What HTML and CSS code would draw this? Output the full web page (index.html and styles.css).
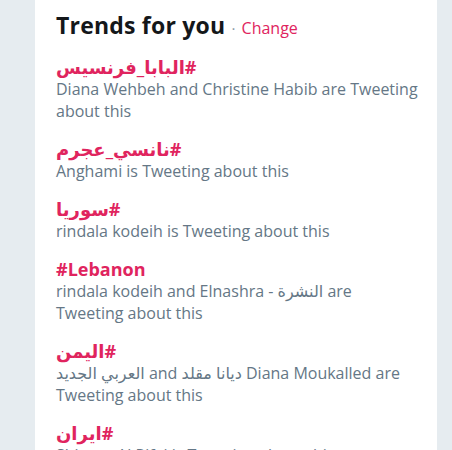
FILE: index.html
```html
<!DOCTYPE html>
<html>
<head>
<meta charset="utf-8">
<link rel="stylesheet" href="styles.css">
</head>
<body>
<div class="page">
  <section class="card">
    <h2 class="title">Trends for you <span class="dot">·</span> <a class="change">Change</a></h2>
    <ul class="trends">
      <li class="trend">
        <div class="name"><span dir="rtl">#البابا_فرنسيس</span></div>
        <div class="desc">Diana Wehbeh and Christine Habib are Tweeting about this</div>
      </li>
      <li class="trend">
        <div class="name"><span dir="rtl">#نانسي_عجرم</span></div>
        <div class="desc">Anghami is Tweeting about this</div>
      </li>
      <li class="trend">
        <div class="name"><span dir="rtl">#سوريا</span></div>
        <div class="desc">rindala kodeih is Tweeting about this</div>
      </li>
      <li class="trend">
        <div class="name">#Lebanon</div>
        <div class="desc">rindala kodeih and Elnashra - النشرة are<br>Tweeting about this</div>
      </li>
      <li class="trend">
        <div class="name"><span dir="rtl">#اليمن</span></div>
        <div class="desc">العربي الجديد and ديانا مقلد Diana Moukalled are Tweeting about this</div>
      </li>
      <li class="trend">
        <div class="name"><span dir="rtl">#ايران</span></div>
        <div class="desc">Shireen Al Rifai is Tweeting about this</div>
      </li>
    </ul>
  </section>
</div>
</body>
</html>
```
FILE: styles.css
```css
html, body {
  margin: 0;
  padding: 0;
  background: #e6ecf0;
  height: 100%;
  overflow: hidden;
}
body {
  font-family: "Open Sans", "DejaVu Sans", sans-serif;
}
.page {
  display: flex;
  height: 450px;
}
.card {
  margin-left: 35px;
  width: 402px;
  background: #ffffff;
  padding: 11px 12px 0 21px;
  box-sizing: border-box;
}
.title {
  margin: 0 0 6px 0;
  font-size: 23px;
  line-height: 28px;
  font-weight: 700;
  color: #14171a;
  letter-spacing: 0.2px;
}
.dot {
  font-size: 15px;
  font-weight: 400;
  letter-spacing: 0;
  color: #8899a6;
}
.change {
  font-size: 16px;
  font-weight: 400;
  letter-spacing: 0;
  color: #e0245e;
}
.trends {
  list-style: none;
  margin: 0;
  padding: 0;
}
.trend {
  padding: 8px 0;
}
.name {
  font-size: 18px;
  line-height: 22px;
  font-weight: 700;
  color: #e0245e;
}
.desc {
  font-size: 16px;
  line-height: 22px;
  color: #657786;
}
```
